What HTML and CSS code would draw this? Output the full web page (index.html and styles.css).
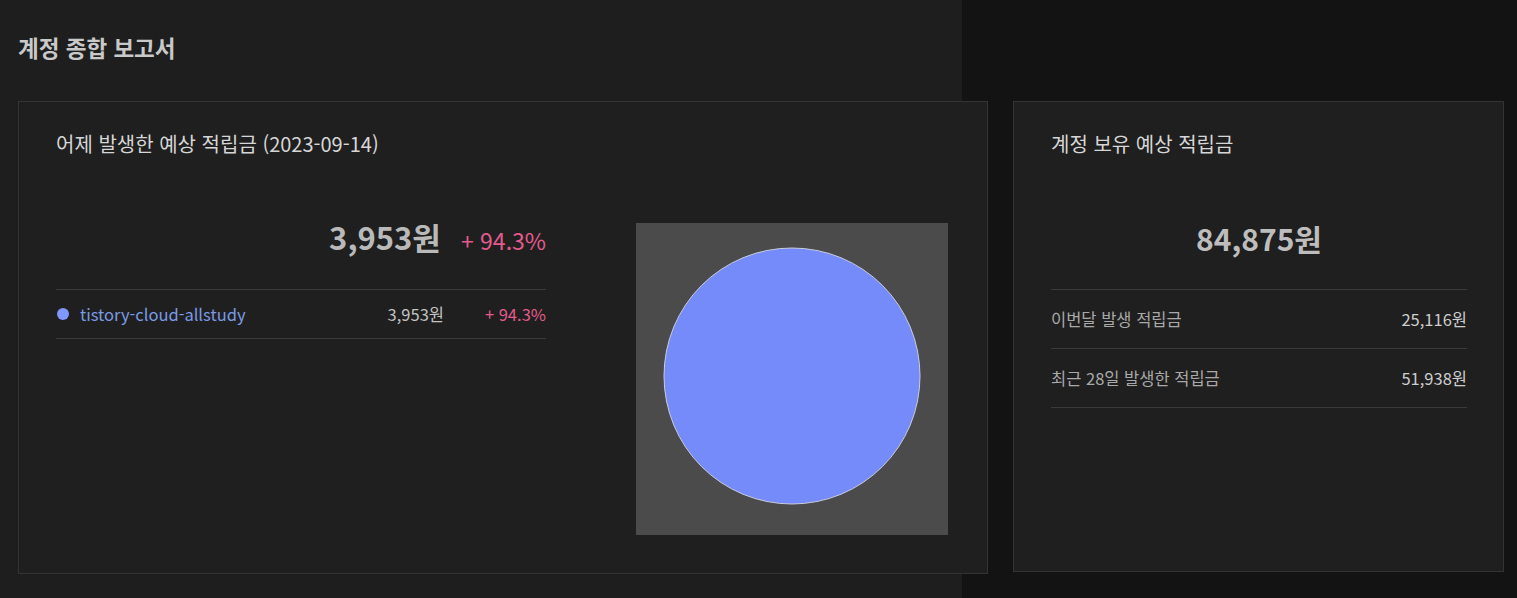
FILE: index.html
```html
<!DOCTYPE html>
<html lang="ko">
<head>
<meta charset="utf-8">
<title>계정 종합 보고서</title>
<link rel="stylesheet" href="styles.css">
</head>
<body>
<div class="panel">
  <h1 class="page-title">계정 종합 보고서</h1>
  <div class="cards">
    <section class="card card-main">
      <h2 class="card-title">어제 발생한 예상 적립금 (2023-09-14)</h2>
      <div class="main-body">
        <div class="summary">
          <div class="total">
            <span class="total-value">3,953원</span>
            <span class="total-rate">+ 94.3%</span>
          </div>
          <div class="legend-row">
            <span class="dot"></span>
            <span class="legend-name">tistory-cloud-allstudy</span>
            <span class="legend-value">3,953원</span>
            <span class="legend-rate">+ 94.3%</span>
          </div>
        </div>
        <div class="chart">
          <svg width="312" height="312" viewBox="0 0 312 312">
            <circle cx="156" cy="153" r="128" fill="#748bf9" stroke="#c8cbe0" stroke-width="1"/>
          </svg>
        </div>
      </div>
    </section>
    <section class="card card-side">
      <h2 class="card-title">계정 보유 예상 적립금</h2>
      <div class="side-total">84,875원</div>
      <div class="side-list">
        <div class="side-row"><span class="side-label">이번달 발생 적립금</span><span class="side-value">25,116원</span></div>
        <div class="side-row"><span class="side-label">최근 28일 발생한 적립금</span><span class="side-value">51,938원</span></div>
      </div>
    </section>
  </div>
</div>
</body>
</html>
```

FILE: styles.css
```css
* { box-sizing: border-box; }
html, body { margin: 0; padding: 0; }
body {
  background: #131313;
  font-family: "Noto Sans CJK KR", "Noto Sans", sans-serif;
  color: #cfcfcf;
}
.panel {
  width: 962px;
  min-height: 100vh;
  background: #1e1e1e;
  padding: 32px 0 0 18px;
}
.page-title {
  margin: 0;
  font-size: 22.5px;
  line-height: 30px;
  font-weight: 700;
  color: #c9c9c9;
}
.cards {
  display: flex;
  gap: 25px;
  width: max-content;
  margin-top: 39px;
  align-items: flex-start;
}
.card {
  background: #1f1f1f;
  border: 1px solid #333333;
  padding: 29px 38px 38px 37px;
}
.card-main { width: 970px; height: 473px; }
.card-side { width: 491px; height: 471px; padding-right: 36px; }
.card-title {
  margin: 0;
  font-size: 20px;
  line-height: 26px;
  font-weight: 400;
  color: #d6d6d6;
}
.main-body {
  display: flex;
  margin-top: 66px;
}
.summary { width: 490px; }
.total {
  display: flex;
  justify-content: flex-end;
  align-items: baseline;
  gap: 20px;
  height: 28px;
  line-height: 28px;
  margin-bottom: 38px;
}
.total-value { font-size: 31px; font-weight: 700; color: #b9b9b9; }
.total-rate { font-size: 23px; color: #e35b8d; }
.legend-row {
  display: flex;
  align-items: center;
  height: 50px;
  border-top: 1px solid #3a3a3a;
  border-bottom: 1px solid #3a3a3a;
  font-size: 16.5px;
}
.dot {
  width: 12px; height: 12px; border-radius: 50%;
  background: #8296ff;
  margin: 0 11px 0 1px;
}
.legend-name { flex: 1; color: #7b9ae3; }
.legend-value { color: #c3c3c3; }
.legend-rate { width: 102px; text-align: right; color: #e35b8d; }
.chart {
  width: 312px; height: 312px;
  background: #4b4b4b;
  margin-left: 90px;
}
.chart svg { display: block; }
.side-total {
  margin-top: 66px;
  height: 30px;
  line-height: 30px;
  text-align: center;
  font-size: 30px;
  font-weight: 700;
  color: #bdbdbd;
  margin-bottom: 36px;
}
.side-list { border-top: 1px solid #3a3a3a; }
.side-row {
  display: flex;
  justify-content: space-between;
  align-items: center;
  height: 59px;
  border-bottom: 1px solid #3a3a3a;
  font-size: 16.5px;
}
.side-label { color: #a9a9a9; }
.side-value { color: #cdcdcd; }
```
